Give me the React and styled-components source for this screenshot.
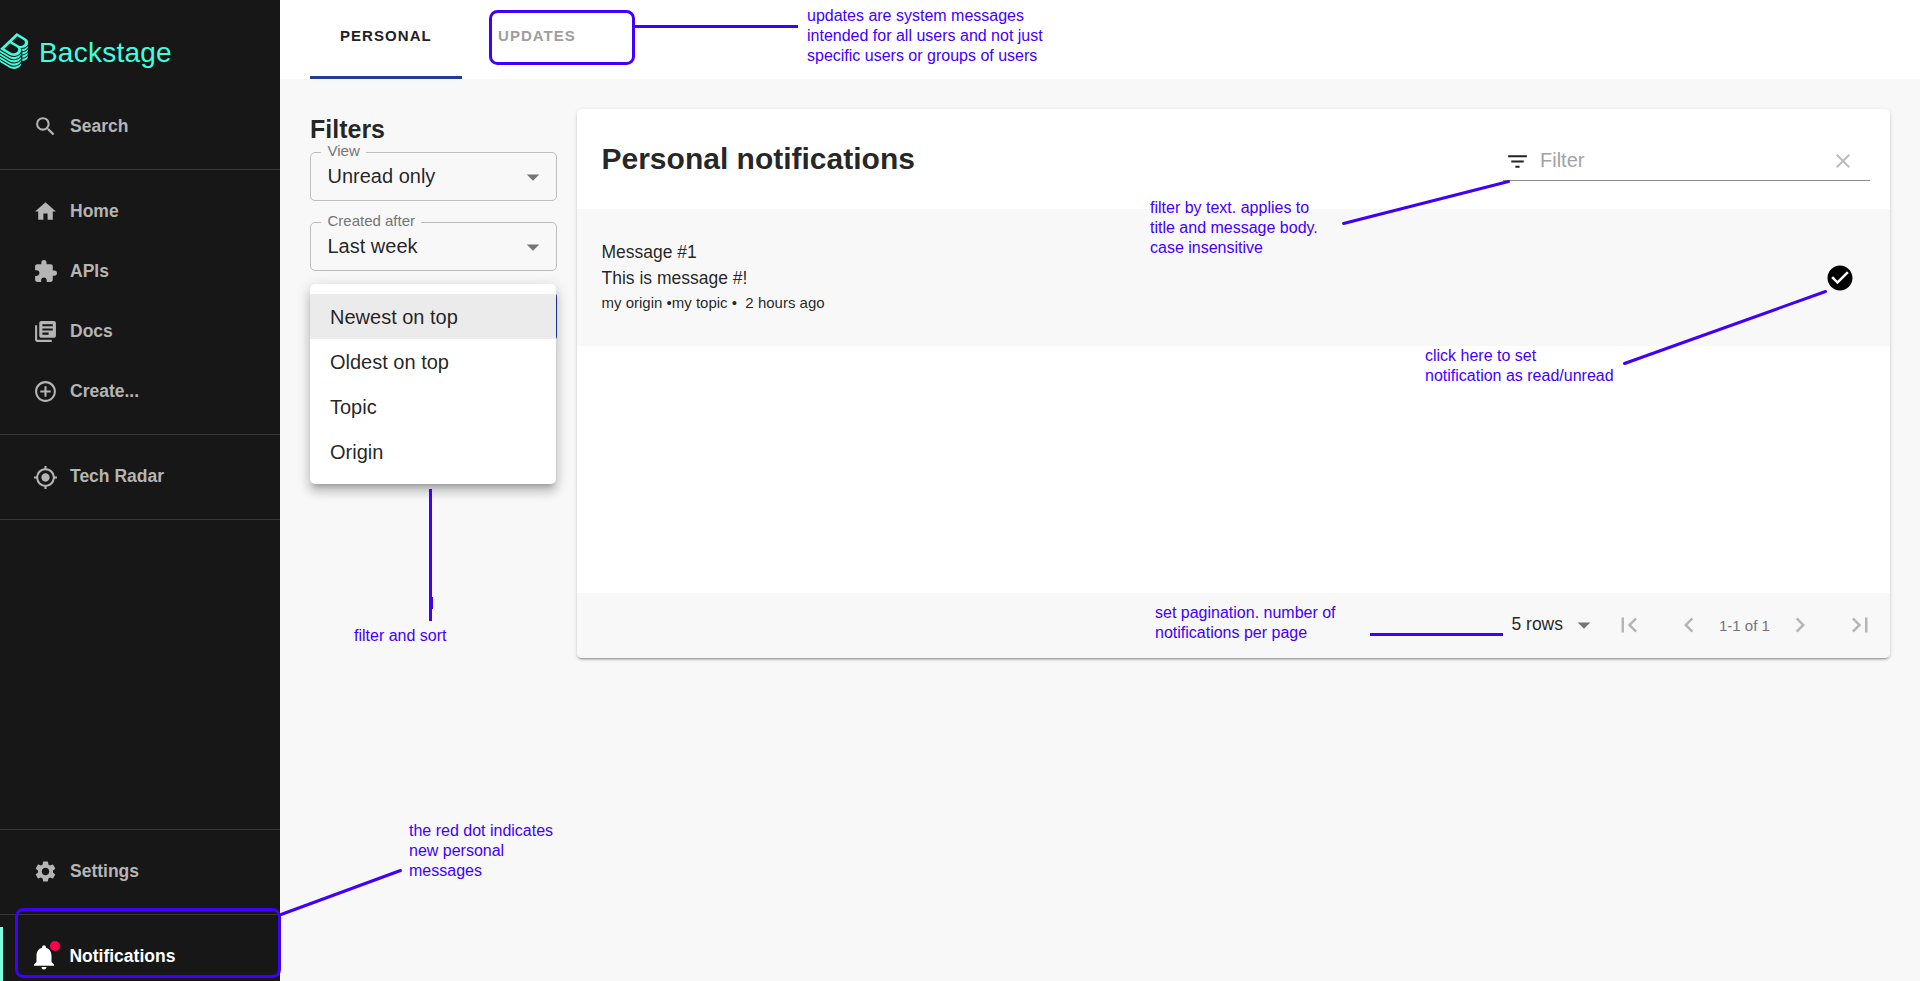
import React from "react";
import styled, { createGlobalStyle } from "styled-components";
import {
  MdSearch, MdHome, MdExtension, MdLibraryBooks, MdControlPoint, MdMyLocation, MdSettings,
  MdNotifications, MdFilterList, MdClear, MdCheckCircle, MdFirstPage, MdLastPage,
  MdChevronLeft, MdChevronRight, MdArrowDropDown,
} from "react-icons/md";

const GlobalStyle = createGlobalStyle`
  * { box-sizing: border-box; }
  body { margin: 0; overflow: hidden; font-family: "Liberation Sans", Arial, sans-serif; color: rgba(0,0,0,.87); }
`;

const Page = styled.div`
  position: relative;
  display: flex;
  width: 1920px;
  height: 981px;
  overflow: hidden;
  background: #f8f8f8;
`;

const Sidebar = styled.nav`
  display: flex;
  flex-direction: column;
  width: 280px;
  flex: none;
  background: #171717;
`;

const Brand = styled.div`
  display: flex;
  align-items: center;
  height: 96px;
  flex: none;
  padding-top: 6px;
  gap: 10.5px;
  color: #40ffe0;
`;

const BrandMark = styled.svg`
  width: 28.4px;
  height: 36px;
  fill: currentColor;
`;

const BrandName = styled.span`
  font-size: 28px;
  line-height: 32px;
  letter-spacing: 0.25px;
  padding-top: 3px;
`;

const Divider = styled.hr`
  width: 100%;
  height: 1px;
  flex: none;
  margin: 13px 0 11px;
  border: 0;
  background: #383838;
`;

const NavItem = styled.a`
  display: flex;
  align-items: center;
  height: ${(p) => (p.$active ? 58 : 60)}px;
  margin: ${(p) => (p.$active ? "1px 0 -4px" : "0")};
  flex: none;
  padding-left: ${(p) => (p.$active ? 26 : 33)}px;
  border-left: ${(p) => (p.$active ? "3px solid #7dffe0" : "0")};
  color: ${(p) => (p.$active ? "#fff" : "#b5b5b5")};
  font-size: 17.5px;
  font-weight: 700;
`;

const NavIcon = styled.span`
  position: relative;
  display: flex;
  width: ${(p) => (p.$large ? 40.4 : 37)}px;
  padding-top: ${(p) => p.$drop || 1}px;
  svg {
    flex: none;
    width: ${(p) => (p.$large ? 30 : 25)}px;
    height: ${(p) => (p.$large ? 30 : 25)}px;
  }
`;

const UnreadDot = styled.span`
  position: absolute;
  top: 0;
  left: 21px;
  width: 10px;
  height: 10px;
  border-radius: 50%;
  background: #ff0051;
`;

const Spacer = styled.div`
  flex: 1;
`;

const Main = styled.main`
  flex: 1;
  display: flex;
  flex-direction: column;
`;

const TabBar = styled.header`
  display: flex;
  height: 79px;
  padding-left: 30px;
  background: #fff;
`;

const Tab = styled.div`
  display: flex;
  align-items: center;
  width: 152px;
  padding: 0 0 6px ${(p) => (p.$selected ? 30 : 36)}px;
  border-bottom: 3px solid ${(p) => (p.$selected ? "#1f3c96" : "transparent")};
  color: ${(p) => (p.$selected ? "#222" : "#9e9e9e")};
  font-size: 15px;
  font-weight: 700;
  letter-spacing: 1.05px;
`;

const Content = styled.div`
  display: flex;
  align-items: flex-start;
  gap: 20px;
  padding: 30px 30px 0;
`;

const FilterColumn = styled.aside`
  width: 247px;
  flex: none;
`;

const FilterTitle = styled.h2`
  margin: 5px 0 8px;
  font-size: 25px;
  line-height: 30px;
`;

const SelectBox = styled.fieldset`
  position: relative;
  display: flex;
  align-items: center;
  justify-content: space-between;
  height: 49px;
  margin: 0 0 21px;
  padding: 0 8px 0 16.5px;
  border: ${(p) => (p.$focused ? "2px solid #1f3c96" : "1px solid #bdbdbd")};
  border-radius: 5px;
  font-size: 20px;
  svg { width: 30px; height: 30px; color: #757575; }
`;

const SelectValue = styled.span`
  padding-bottom: 1px;
`;

const SelectLabel = styled.span`
  position: absolute;
  top: -11px;
  left: 10px;
  padding: 0 6px 0 6.5px;
  background: #f8f8f8;
  color: #757575;
  font-size: 15px;
  line-height: 18px;
`;

const SortMenu = styled.ul`
  position: absolute;
  z-index: 2;
  left: 310px;
  top: 284px;
  width: 246px;
  height: 200px;
  margin: 0;
  padding: 10px 0;
  list-style: none;
  border-radius: 5px;
  background: #fff;
  box-shadow: 0 5px 5px -3px rgba(0,0,0,.2), 0 8px 10px 1px rgba(0,0,0,.14), 0 3px 14px 2px rgba(0,0,0,.12);
`;

const SortOption = styled.li`
  height: 45px;
  padding-left: 20px;
  font-size: 20px;
  line-height: 46px;
  background: ${(p) => (p.$selected ? "#ebebeb" : "transparent")};
`;

const Card = styled.section`
  flex: 1;
  height: 549px;
  display: flex;
  flex-direction: column;
  overflow: hidden;
  border-radius: 5px;
  background: #fff;
  box-shadow: 0 3px 1px -2px rgba(0,0,0,.2), 0 2px 2px 0 rgba(0,0,0,.14), 0 1px 5px 0 rgba(0,0,0,.12);
`;

const CardHeader = styled.div`
  display: flex;
  justify-content: space-between;
  height: 100px;
  padding: 30px 20px 0 24.5px;
`;

const CardTitle = styled.h1`
  margin: 0;
  font-size: 30px;
  line-height: 40px;
`;

const FilterField = styled.div`
  display: flex;
  align-items: center;
  width: 367px;
  height: 42px;
  border-bottom: 1px solid #8c8c8c;
  padding: 3px 15px 0 2px;
  color: #a2a2a2;
  font-size: 20px;
  svg:first-child { width: 25px; height: 25px; color: #222; margin-right: 10px; }
  svg:last-child { width: 24px; height: 24px; margin-left: auto; color: #bdbdbd; }
`;

const FilterPlaceholder = styled.span`
  padding-bottom: 2px;
`;

const MessageRow = styled.article`
  display: flex;
  align-items: center;
  justify-content: space-between;
  height: 137px;
  padding: 0 35px 0 24.5px;
  background: #f8f8f8;
  svg { width: 30px; height: 30px; color: #000; }
`;

const MessageText = styled.div`
  font-size: 17.5px;
  line-height: 26px;
`;

const MessageMeta = styled.div`
  margin: -1px 0 1px;
  font-size: 15px;
  line-height: 25px;
  white-space: pre;
`;

const CardFooter = styled.footer`
  display: flex;
  align-items: center;
  justify-content: flex-end;
  height: 65px;
  margin-top: auto;
  padding: 0 15px 1px 0;
  background: #f8f8f8;
  svg { width: 30px; height: 30px; color: #b5b5b5; }
`;

const RowsSelect = styled.div`
  display: flex;
  align-items: center;
  font-size: 17.5px;
  margin-right: 15px;
  svg { color: #757575; margin-left: 6px; }
`;

const RowsValue = styled.span`
  padding-bottom: 2px;
`;

const PageStatus = styled.span`
  width: 51px;
  margin: 0 15px;
  color: #757575;
  font-size: 15px;
  white-space: nowrap;
`;

const PageButtons = styled.div`
  display: flex;
  gap: 30px;
`;

const NoteLines = styled.svg`
  position: absolute;
  z-index: 3;
  inset: 0;
  width: 1920px;
  height: 981px;
  fill: none;
  stroke: #3f00ff;
  stroke-width: 3;
  stroke-linecap: round;
  pointer-events: none;
`;

const Note = styled.p`
  position: absolute;
  z-index: 3;
  left: ${(p) => p.$x}px;
  top: ${(p) => p.$y}px;
  margin: 0;
  color: #3f00ff;
  font-size: 16px;
  line-height: 20px;
  white-space: pre;
`;

const LOGO_PATH =
  "M303,166.05a80.69,80.69,0,0,0,13.45-10.37c.79-.77,1.55-1.53,2.3-2.3a83.12,83.12,0,0,0,7.93-9.38A63.69,63.69,0,0,0,333,133.23a48.58,48.58,0,0,0,4.35-16.4c1.49-19.39-10-38.67-35.62-54.22L198.56,0,78.3,115.23,0,190.25l108.6,65.91a111.59,111.59,0,0,0,57.76,16.41c24.92,0,48.8-8.8,66.42-25.69,19.16-18.36,25.52-42.12,13.7-61.87a49.22,49.22,0,0,0-6.8-8.87A89.17,89.17,0,0,0,259,178.29h.15a85.08,85.08,0,0,0,31-5.79A80.88,80.88,0,0,0,303,166.05ZM202.45,225.86c-19.32,18.51-50.4,21.23-75.7,5.9L51.61,186.15l67.45-64.64,76.41,46.38C223,184.58,221.49,207.61,202.45,225.86Zm8.93-82.22-70.65-42.89L205.14,39,274.51,81.1c25.94,15.72,29.31,37,10.55,55A60.69,60.69,0,0,1,211.38,143.64Zm29.86,190c-19.57,18.75-46.17,29.09-74.88,29.09a123.73,123.73,0,0,1-64.1-18.2L0,282.52v24.67L108.6,373.1a111.6,111.6,0,0,0,57.76,16.42c24.92,0,48.8-8.81,66.42-25.69,12.88-12.34,20-27.13,19.68-41.49v-1.79A87.27,87.27,0,0,1,241.24,333.68Zm0-39c-19.57,18.75-46.17,29.08-74.88,29.08a123.81,123.81,0,0,1-64.1-18.19L0,243.53v24.68l108.6,65.91a111.6,111.6,0,0,0,57.76,16.42c24.92,0,48.8-8.81,66.42-25.69,12.88-12.34,20-27.13,19.68-41.5v-1.78A87.27,87.27,0,0,1,241.24,294.7Zm0-39c-19.57,18.76-46.17,29.09-74.88,29.09a123.81,123.81,0,0,1-64.1-18.19L0,204.55v24.68l108.6,65.91a111.59,111.59,0,0,0,57.76,16.41c24.92,0,48.8-8.8,66.42-25.68,12.88-12.35,20-27.13,19.68-41.5v-1.82A86.09,86.09,0,0,1,241.24,255.71Zm83.7,25.74a94.15,94.15,0,0,1-60.2,25.86h0V334a81.6,81.6,0,0,0,51.74-22.37c14-13.38,21.14-28.11,21-42.64v-2.19A94.92,94.92,0,0,1,324.94,281.45Zm-83.7,91.21c-19.57,18.76-46.17,29.09-74.88,29.09a123.73,123.73,0,0,1-64.1-18.2L0,321.5v24.68l108.6,65.9a111.6,111.6,0,0,0,57.76,16.42c24.92,0,48.8-8.8,66.42-25.69,12.88-12.34,20-27.13,19.68-41.49v-1.79A86.29,86.29,0,0,1,241.24,372.66ZM327,162.45c-.68.69-1.35,1.38-2.05,2.06a94.37,94.37,0,0,1-10.64,8.65,91.35,91.35,0,0,1-11.6,7,94.53,94.53,0,0,1-26.24,8.71,97.69,97.69,0,0,1-14.16,1.57c.5,1.61.9,3.25,1.25,4.9a53.27,53.27,0,0,1,1.14,12V217h.05a84.41,84.41,0,0,0,25.35-5.55,81,81,0,0,0,26.39-16.82c.8-.77,1.5-1.56,2.26-2.34a82.08,82.08,0,0,0,7.93-9.38A63.76,63.76,0,0,0,333,172.17a48.55,48.55,0,0,0,4.32-16.45c.09-1.23.2-2.47.19-3.7V150q-1.08,1.54-2.25,3.09A96.73,96.73,0,0,1,327,162.45Zm0,77.92c-.69.7-1.31,1.41-2,2.1a94.2,94.2,0,0,1-60.2,25.86h0l0,26.67h0a81.6,81.6,0,0,0,51.74-22.37A73.51,73.51,0,0,0,333,250.13a48.56,48.56,0,0,0,4.32-16.44c.09-1.24.2-2.47.19-3.71v-2.19c-.74,1.07-1.46,2.15-2.27,3.21A95.68,95.68,0,0,1,327,240.37Zm0-39c-.69.7-1.31,1.41-2,2.1a93.18,93.18,0,0,1-10.63,8.65,91.63,91.63,0,0,1-11.63,7,95.47,95.47,0,0,1-37.94,10.18h0V256h0a81.65,81.65,0,0,0,51.74-22.37A73.51,73.51,0,0,0,333,211.13a48.56,48.56,0,0,0,4.32-16.44c.09-1.24.2-2.48.19-3.71v-2.2c-.74,1.08-1.46,2.16-2.27,3.22A95.68,95.68,0,0,1,327,201.39Z";

const mainLinks = [
  ["Home", MdHome],
  ["APIs", MdExtension],
  ["Docs", MdLibraryBooks],
  ["Create...", MdControlPoint],
];

const notes = [
  [807, 6, "updates are system messages\nintended for all users and not just\nspecific users or groups of users"],
  [1150, 198, "filter by text. applies to\ntitle and message body.\ncase insensitive"],
  [1425, 346, "click here to set\nnotification as read/unread"],
  [1155, 603, "set pagination. number of\nnotifications per page"],
  [354, 626, "filter and sort"],
  [409, 821, "the red dot indicates\nnew personal\nmessages"],
];

function NavLink({ label, icon: Icon, active, drop }) {
  return (
    <NavItem $active={active}>
      <NavIcon $drop={drop} $large={active}>
        <Icon />
        {active && <UnreadDot />}
      </NavIcon>
      {label}
    </NavItem>
  );
}

function FilterSelect({ label, value, focused }) {
  return (
    <SelectBox $focused={focused}>
      {label && <SelectLabel>{label}</SelectLabel>}
      <SelectValue>{value}</SelectValue>
      <MdArrowDropDown />
    </SelectBox>
  );
}

export default function App() {
  return (
    <>
      <GlobalStyle />
      <Page>
        <Sidebar>
          <Brand>
            <BrandMark viewBox="0 0 337.46 428.5"><path d={LOGO_PATH} /></BrandMark>
            <BrandName>Backstage</BrandName>
          </Brand>
          <NavLink label="Search" icon={MdSearch} />
          <Divider />
          {mainLinks.map(([label, icon]) => <NavLink key={label} label={label} icon={icon} />)}
          <Divider />
          <NavLink label="Tech Radar" icon={MdMyLocation} drop={3} />
          <Divider />
          <Spacer />
          <Divider />
          <NavLink label="Settings" icon={MdSettings} />
          <Divider />
          <NavLink label="Notifications" icon={MdNotifications} active />
        </Sidebar>
        <Main>
          <TabBar>
            <Tab $selected>PERSONAL</Tab>
            <Tab>UPDATES</Tab>
          </TabBar>
          <Content>
            <FilterColumn>
              <FilterTitle>Filters</FilterTitle>
              <FilterSelect label="View" value="Unread only" />
              <FilterSelect label="Created after" value="Last week" />
              <FilterSelect value="Newest on top" focused />
            </FilterColumn>
            <Card>
              <CardHeader>
                <CardTitle>Personal notifications</CardTitle>
                <FilterField>
                  <MdFilterList />
                  <FilterPlaceholder>Filter</FilterPlaceholder>
                  <MdClear />
                </FilterField>
              </CardHeader>
              <MessageRow>
                <div>
                  <MessageText>Message #1</MessageText>
                  <MessageText>This is message #!</MessageText>
                  <MessageMeta>{"my origin •my topic •  2 hours ago"}</MessageMeta>
                </div>
                <MdCheckCircle />
              </MessageRow>
              <CardFooter>
                <RowsSelect><RowsValue>5 rows</RowsValue><MdArrowDropDown /></RowsSelect>
                <PageButtons><MdFirstPage /><MdChevronLeft /></PageButtons>
                <PageStatus>1-1 of 1</PageStatus>
                <PageButtons><MdChevronRight /><MdLastPage /></PageButtons>
              </CardFooter>
            </Card>
          </Content>
        </Main>
        <SortMenu>
          <SortOption $selected>Newest on top</SortOption>
          <SortOption>Oldest on top</SortOption>
          <SortOption>Topic</SortOption>
          <SortOption>Origin</SortOption>
        </SortMenu>
        <NoteLines viewBox="0 0 1920 981">
          <rect x="490.5" y="11.5" width="143" height="52" rx="7" />
          <path d="M635 26.5H798" strokeLinecap="butt" />
          <path d="M1343.500 223.500L1508.500 181.500" />
          <path d="M1624.500 363.500L1825.500 291.500" />
          <path d="M1370 634.500H1503" strokeLinecap="butt" />
          <path d="M430.500 489V621M431.500 597V609" strokeLinecap="butt" />
          <rect x="16.500" y="909.500" width="263" height="67" rx="7" />
          <path d="M281 914.500L400.500 870.500" />
        </NoteLines>
        {notes.map(([x, y, text]) => <Note key={text} $x={x} $y={y}>{text}</Note>)}
      </Page>
    </>
  );
}
